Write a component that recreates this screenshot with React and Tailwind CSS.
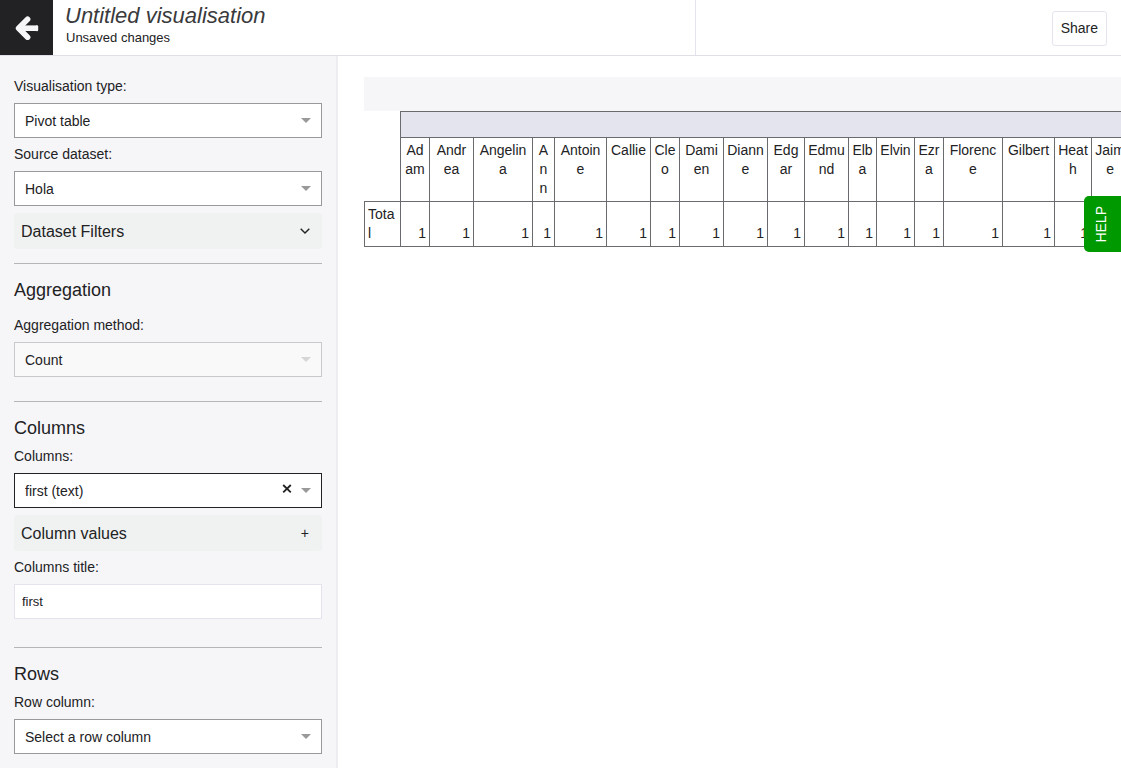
import { useState } from 'react';

const columns = [
  { name: 'Adam', width: 29 },
  { name: 'Andrea', width: 44 },
  { name: 'Angelina', width: 59 },
  { name: 'Ann', width: 22 },
  { name: 'Antoine', width: 52 },
  { name: 'Callie', width: 44 },
  { name: 'Cleo', width: 29 },
  { name: 'Damien', width: 44 },
  { name: 'Dianne', width: 44 },
  { name: 'Edgar', width: 37 },
  { name: 'Edmund', width: 44 },
  { name: 'Elba', width: 28 },
  { name: 'Elvin', width: 38 },
  { name: 'Ezra', width: 29 },
  { name: 'Florence', width: 59 },
  { name: 'Gilbert', width: 52 },
  { name: 'Heath', width: 37 },
  { name: 'Jaime', width: 37 },
];

const labelColumnWidth = 36;
const tableWidth = columns.reduce((sum, c) => sum + c.width, labelColumnWidth);

function SelectField({ id, label, value, disabled, active, clearable }) {
  const [selected, setSelected] = useState(value);
  const tone = disabled
    ? 'border-[#c8c9cc] bg-[#f9f9f9]'
    : active
      ? 'border-[#222224] bg-white'
      : 'border-[#98999c] bg-white';
  return (
    <div>
      <label htmlFor={id} className="mb-[7px] block leading-5">
        {label}
      </label>
      <div className="relative">
        <select
          id={id}
          value={selected}
          disabled={disabled}
          onChange={(e) => setSelected(e.target.value)}
          className={`block h-[35px] w-full appearance-none border pl-[10px] pr-10 pt-px text-[#222224] opacity-100 outline-none ${tone}`}
        >
          <option>{value}</option>
        </select>
        {clearable && (
          <button
            type="button"
            aria-label="Clear"
            className="absolute right-[29px] top-[9px] flex size-3 items-center justify-center"
          >
            <svg viewBox="0 0 12 12" className="size-3" fill="none" stroke="#222224" strokeWidth="1.8">
              <path d="M2.2 3 9.8 10.4M9.8 3 2.2 10.4" />
            </svg>
          </button>
        )}
        <svg
          viewBox="0 0 10 5"
          aria-hidden="true"
          className={`pointer-events-none absolute right-[11px] top-[15px] h-[5px] w-[10px] ${disabled ? 'fill-[#d6d6d6]' : 'fill-[#999999]'}`}
        >
          <path d="M0 0H10L5 5Z" />
        </svg>
      </div>
    </div>
  );
}

function Panel({ title, children }) {
  return (
    <button
      type="button"
      className="mt-[7px] flex h-9 w-full items-center justify-between rounded-[3px] bg-[#f0f2f1] pl-[7px] pr-3 text-base"
    >
      <span className="pt-[2px]">{title}</span>
      {children}
    </button>
  );
}

function SectionTitle({ children }) {
  return <h2 className="pt-[13px] text-lg leading-[26px]">{children}</h2>;
}

export default function App() {
  const [title, setTitle] = useState('first');

  return (
    <div className="flex h-screen flex-col overflow-hidden bg-white font-['Liberation_Sans',Arial,sans-serif] text-sm text-[#222224]">
      <header className="flex h-14 shrink-0 border-b border-[#e0e1e6]">
        <div className="flex w-[62%]">
          <a href="#back" aria-label="Back" className="flex w-[53px] items-center justify-center bg-[#222224]">
            <svg viewBox="0 0 24 24" className="size-6" fill="none" stroke="#f6f6f9" strokeWidth="5.6" strokeLinejoin="round">
              <path d="M12.6 3.2 3.6 12.2l9 9" strokeLinecap="round" />
              <path d="M5 12.2H22" />
              <path d="M22 10.4v3.6" strokeWidth="2.4" strokeLinecap="round" />
            </svg>
          </a>
          <div className="pl-3">
            <h1 className="text-[22px] italic leading-8 text-[#3a3a3c]">Untitled visualisation</h1>
            <p className="pl-px text-[13px] leading-3">Unsaved changes</p>
          </div>
        </div>
        <div className="flex flex-1 items-center justify-end border-l border-[#e4e4ee] pr-[14px] pt-px">
          <button type="button" className="h-[35px] rounded-[3px] border border-[#e4e4ee] px-2">
            Share
          </button>
        </div>
      </header>

      <div className="flex min-h-0 flex-1">
        <aside className="w-[338px] shrink-0 overflow-hidden border-r-2 border-[#eeeef2] bg-[#f6f6f9] pl-[14px] pr-[14px] pt-5">
          <section className="border-b border-[#b4b5b8] pb-[14px]">
            <div className="flex flex-col gap-[6px]">
              <SelectField id="type" label="Visualisation type:" value="Pivot table" />
              <SelectField id="dataset" label="Source dataset:" value="Hola" />
            </div>
            <Panel title="Dataset Filters">
              <svg viewBox="0 0 10 6" className="h-[6px] w-[10px]" fill="none" stroke="#222224" strokeWidth="1.4">
                <path d="M.7.7 5 5 9.3.7" />
              </svg>
            </Panel>
          </section>

          <section className="border-b border-[#b4b5b8] pb-6">
            <SectionTitle>Aggregation</SectionTitle>
            <div className="pt-3">
              <SelectField id="aggregation" label="Aggregation method:" value="Count" disabled />
            </div>
          </section>

          <section className="border-b border-[#b4b5b8] pb-7">
            <SectionTitle>Columns</SectionTitle>
            <div className="pt-[5px]">
              <SelectField id="columns" label="Columns:" value="first (text)" active clearable />
            </div>
            <Panel title="Column values">
              <span className="pr-px text-sm">+</span>
            </Panel>
            <label htmlFor="columns-title" className="mb-[7px] mt-[6px] block leading-5">
              Columns title:
            </label>
            <input
              id="columns-title"
              type="text"
              value={title}
              onChange={(e) => setTitle(e.target.value)}
              className="block h-[35px] w-full border border-[#e4e4ee] bg-white px-[7px] text-[13px] outline-none"
            />
          </section>

          <section>
            <SectionTitle>Rows</SectionTitle>
            <div className="pt-[5px]">
              <SelectField id="row-column" label="Row column:" value="Select a row column" />
            </div>
          </section>
        </aside>

        <main className="min-w-0 flex-1 overflow-hidden pl-[26px] pt-[21px]">
          <div className="h-[34px] bg-[#f6f6f9]" />
          <table
            className="table-fixed border-collapse break-all leading-[19px]"
            style={{ width: tableWidth }}
          >
            <colgroup>
              <col style={{ width: labelColumnWidth }} />
              {columns.map((c) => (
                <col key={c.name} style={{ width: c.width }} />
              ))}
            </colgroup>
            <thead>
              <tr className="h-[26px]">
                <td />
                <td colSpan={columns.length} className="border border-[#6a6b6e] bg-[#e4e4ee]" />
              </tr>
              <tr>
                <td />
                {columns.map((c) => (
                  <th key={c.name} scope="col" className="border border-[#6a6b6e] p-[3px] text-center align-top font-normal">
                    {c.name}
                  </th>
                ))}
              </tr>
            </thead>
            <tbody>
              <tr>
                <th scope="row" className="border border-[#6a6b6e] p-[3px] text-left font-normal">
                  Total
                </th>
                {columns.map((c) => (
                  <td key={c.name} className="border border-[#6a6b6e] p-[3px] text-right align-bottom">
                    1
                  </td>
                ))}
              </tr>
            </tbody>
          </table>
        </main>
      </div>

      <button
        type="button"
        className="fixed right-0 top-[196px] flex h-14 w-[37px] items-center justify-center rounded-l-[5px] bg-[#009900] pr-[3px] text-white"
      >
        <span className="rotate-180 [writing-mode:vertical-rl]">HELP</span>
      </button>
    </div>
  );
}
